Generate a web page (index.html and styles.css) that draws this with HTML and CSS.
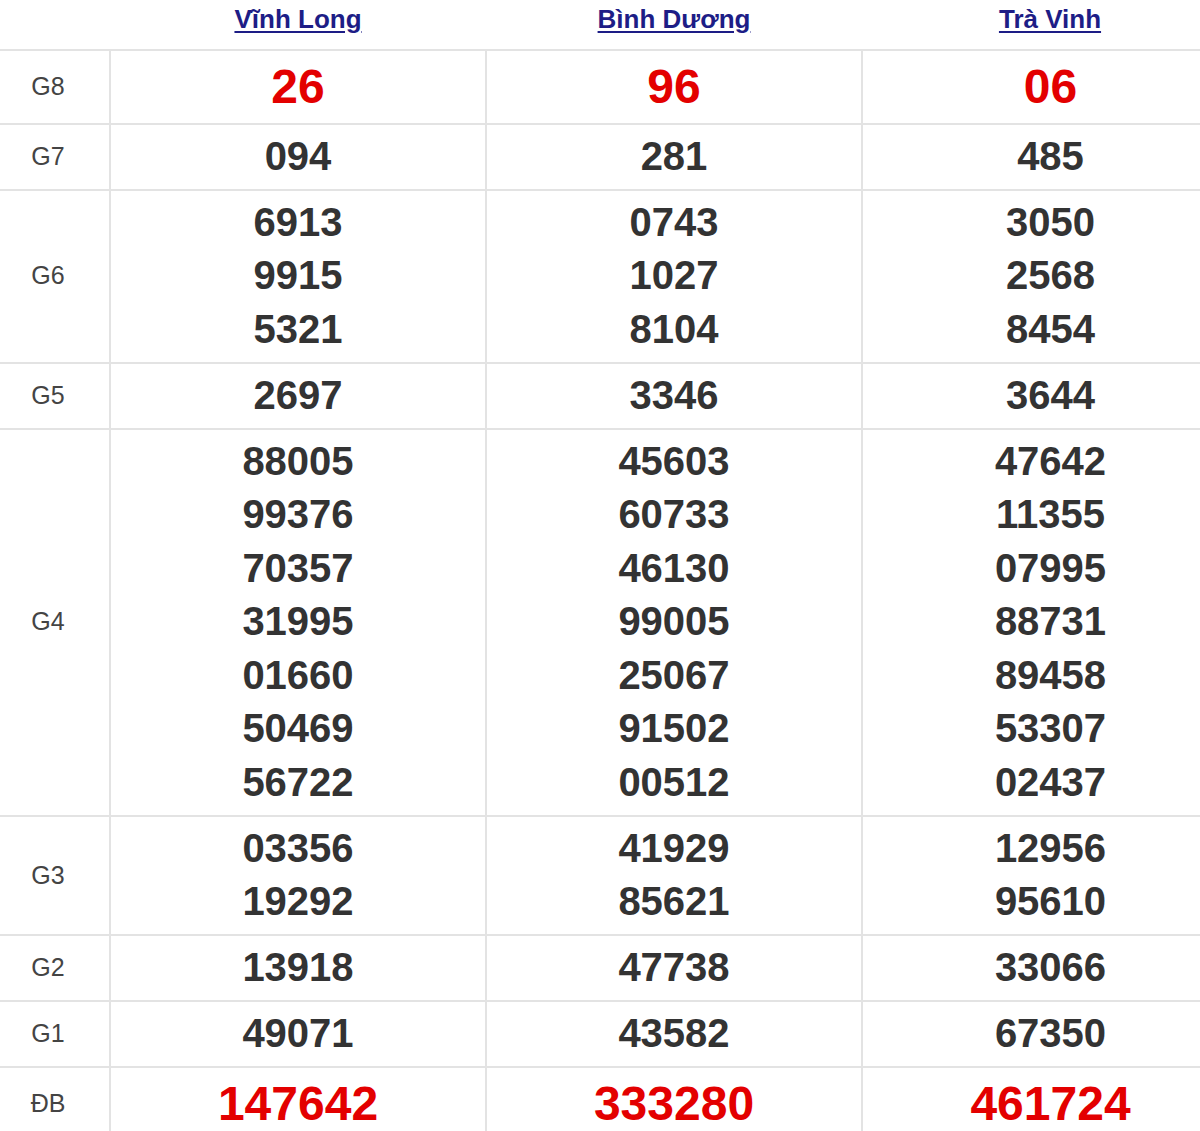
FILE: index.html
```html
<!DOCTYPE html>
<html lang="vi">
<head>
<meta charset="utf-8">
<title>Kết quả xổ số</title>
<link rel="stylesheet" href="styles.css">
</head>
<body>
<table class="kq">
  <colgroup>
    <col class="c-label">
    <col class="c-prov">
    <col class="c-prov">
    <col class="c-prov">
  </colgroup>
  <thead>
    <tr>
      <th></th>
      <th><a href="#">Vĩnh Long</a></th>
      <th><a href="#">Bình Dương</a></th>
      <th><a href="#">Trà Vinh</a></th>
    </tr>
  </thead>
  <tbody>
    <tr class="big">
      <td class="lbl">G8</td>
      <td class="red">26</td>
      <td class="red">96</td>
      <td class="red">06</td>
    </tr>
    <tr>
      <td class="lbl">G7</td>
      <td>094</td>
      <td>281</td>
      <td>485</td>
    </tr>
    <tr>
      <td class="lbl">G6</td>
      <td><div>6913</div><div>9915</div><div>5321</div></td>
      <td><div>0743</div><div>1027</div><div>8104</div></td>
      <td><div>3050</div><div>2568</div><div>8454</div></td>
    </tr>
    <tr>
      <td class="lbl">G5</td>
      <td>2697</td>
      <td>3346</td>
      <td>3644</td>
    </tr>
    <tr>
      <td class="lbl">G4</td>
      <td><div>88005</div><div>99376</div><div>70357</div><div>31995</div><div>01660</div><div>50469</div><div>56722</div></td>
      <td><div>45603</div><div>60733</div><div>46130</div><div>99005</div><div>25067</div><div>91502</div><div>00512</div></td>
      <td><div>47642</div><div>11355</div><div>07995</div><div>88731</div><div>89458</div><div>53307</div><div>02437</div></td>
    </tr>
    <tr>
      <td class="lbl">G3</td>
      <td><div>03356</div><div>19292</div></td>
      <td><div>41929</div><div>85621</div></td>
      <td><div>12956</div><div>95610</div></td>
    </tr>
    <tr>
      <td class="lbl">G2</td>
      <td>13918</td>
      <td>47738</td>
      <td>33066</td>
    </tr>
    <tr>
      <td class="lbl">G1</td>
      <td>49071</td>
      <td>43582</td>
      <td>67350</td>
    </tr>
    <tr class="big">
      <td class="lbl">ĐB</td>
      <td class="red">147642</td>
      <td class="red">333280</td>
      <td class="red">461724</td>
    </tr>
  </tbody>
</table>
</body>
</html>
```
FILE: styles.css
```css
html, body {
  margin: 0;
  padding: 0;
  background: #fff;
  overflow: hidden;
}
body {
  font-family: "Liberation Sans", Arial, sans-serif;
}
.kq {
  width: 1238px;
  border-collapse: collapse;
  table-layout: fixed;
}
.c-label { width: 110px; }
.c-prov { width: 376px; }

.kq th {
  height: 49px;
  padding: 0;
  vertical-align: top;
  text-align: center;
  border-bottom: 2px solid #e3e3e3;
}
.kq th a {
  display: inline-block;
  font-size: 26px;
  font-weight: bold;
  line-height: 38px;
  color: #1d1d86;
  text-decoration: underline;
  text-underline-offset: 3px;
}

.kq td {
  padding: 5.25px 0;
  text-align: center;
  vertical-align: middle;
  font-size: 40px;
  font-weight: bold;
  line-height: 53.5px;
  color: #333;
  border-top: 2px solid #e3e3e3;
  border-left: 2px solid #e3e3e3;
}
.kq tbody tr:first-child td { border-top: none; }
.kq td.lbl {
  border-left: none;
  font-size: 25px;
  font-weight: normal;
  color: #444;
  padding-right: 13px;
}
.kq tr.big td {
  line-height: 61px;
}
.kq td.red {
  font-size: 48px;
  color: #e30000;
}
```
